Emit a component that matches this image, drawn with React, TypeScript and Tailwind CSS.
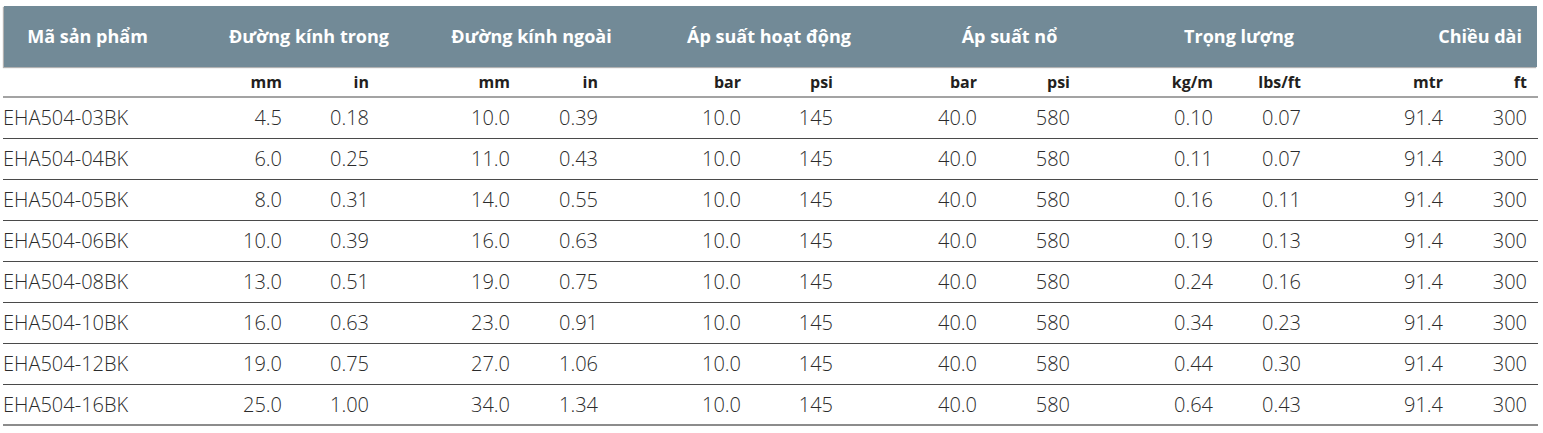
import React from "react";

// Bảng thông số ống EHA504 — header xám xanh, hai dòng đơn vị, số canh phải.
type Row = [string, string, string, string, string, string, string, string, string, string, string, string, string];

const ROWS: Row[] = [
  ["EHA504-03BK", "4.5", "0.18", "10.0", "0.39", "10.0", "145", "40.0", "580", "0.10", "0.07", "91.4", "300"],
  ["EHA504-04BK", "6.0", "0.25", "11.0", "0.43", "10.0", "145", "40.0", "580", "0.11", "0.07", "91.4", "300"],
  ["EHA504-05BK", "8.0", "0.31", "14.0", "0.55", "10.0", "145", "40.0", "580", "0.16", "0.11", "91.4", "300"],
  ["EHA504-06BK", "10.0", "0.39", "16.0", "0.63", "10.0", "145", "40.0", "580", "0.19", "0.13", "91.4", "300"],
  ["EHA504-08BK", "13.0", "0.51", "19.0", "0.75", "10.0", "145", "40.0", "580", "0.24", "0.16", "91.4", "300"],
  ["EHA504-10BK", "16.0", "0.63", "23.0", "0.91", "10.0", "145", "40.0", "580", "0.34", "0.23", "91.4", "300"],
  ["EHA504-12BK", "19.0", "0.75", "27.0", "1.06", "10.0", "145", "40.0", "580", "0.44", "0.30", "91.4", "300"],
  ["EHA504-16BK", "25.0", "1.00", "34.0", "1.34", "10.0", "145", "40.0", "580", "0.64", "0.43", "91.4", "300"],
];

const UNITS = ["mm", "in", "mm", "in", "bar", "psi", "bar", "psi", "kg/m", "lbs/ft", "mtr", "ft"];

const GROUPS = ["Đường kính trong", "Đường kính ngoài", "Áp suất hoạt động", "Áp suất nổ", "Trọng lượng"];

// cột dữ liệu: mép phải của số trùng với mép phải của đơn vị
const COLS =
  "grid grid-cols-[197px_82px_87px_141px_88px_143px_92px_144px_93px_143px_88px_142px_84px_1fr]";

export default function App() {
  return (
    <div className="w-[1543px] h-[433px] bg-white pt-[6px] font-['Open_Sans',sans-serif]">
      <div className="ml-[3px] w-[1535px]">
        <div className="mx-[1px] h-[61px] bg-[#728a97] shadow-[-1px_1px_1px_rgba(0,0,0,0.3)] grid grid-cols-[167px_276px_169px_306px_175px_284px_1fr] items-center text-white text-[18px] font-bold whitespace-nowrap">
          <div className="text-center">Mã sản phẩm</div>
          {GROUPS.map((g) => (
            <div key={g} className="text-center">{g}</div>
          ))}
          <div className="text-right pr-[15px]">Chiều dài</div>
        </div>

        <div className={`${COLS} h-[31px] items-center border-b-2 border-[#a3a3a3] text-[16px] font-bold text-[#231f20]`}>
          <div />
          {UNITS.map((u, i) => (
            <div key={i} className="text-right">{u}</div>
          ))}
          <div />
        </div>

        {ROWS.map((r, ri) => (
          <div
            key={r[0]}
            className={`${COLS} h-[41px] items-center text-[20px] font-light text-[#2b2b2b] ${
              ri === ROWS.length - 1 ? "border-b-2 border-[#8c8c8c]" : "border-b border-[#4a4a4a]"
            }`}
          >
            {r.map((c, ci) => (
              <div key={ci} className={ci === 0 ? "text-left" : "text-right"}>{c}</div>
            ))}
            <div />
          </div>
        ))}
      </div>
    </div>
  );
}
